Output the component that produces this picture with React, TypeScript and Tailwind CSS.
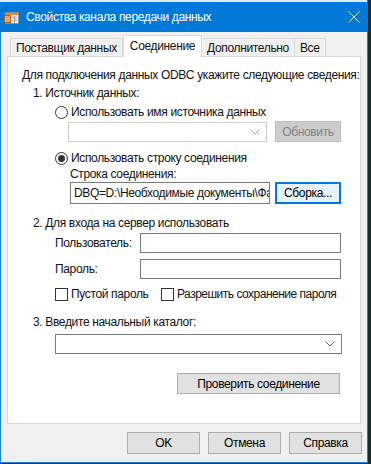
import React from 'react';

const font = { fontFamily: '"Segoe UI", "Liberation Sans", Arial, sans-serif' };

const Button = ({ children, className = '', disabled = false, focused = false }: any) => (
  <div
    className={`flex items-center justify-center text-[12px] ${
      disabled
        ? 'bg-[#cccccc] border border-[#bfbfbf] text-[#838383]'
        : focused
        ? 'bg-[#e5f1fb] border-2 border-[#0078d7] text-black'
        : 'bg-[#e1e1e1] border border-[#adadad] text-black'
    } ${className}`}
  >
    {children}
  </div>
);

const Chevron = ({ color = '#606060' }: any) => (
  <svg width="10" height="6" viewBox="0 0 10 6" className="shrink-0">
    <path d="M0.5 0.5 L5 5 L9.5 0.5" fill="none" stroke={color} strokeWidth="1" />
  </svg>
);

const Radio = ({ checked }: any) => (
  <div className="w-[13px] h-[13px] rounded-full border border-[#333333] bg-white flex items-center justify-center shrink-0">
    {checked && <div className="w-[7px] h-[7px] rounded-full bg-[#333333]" />}
  </div>
);

const Checkbox = () => <div className="w-[13px] h-[13px] border border-[#333333] bg-white shrink-0" />;

const Tab = ({ label, active }: any) =>
  active ? (
    <div className="h-[22px] px-[6px] bg-white border border-b-0 border-[#d9d9d9] flex items-center justify-center -mb-px z-10 relative">
      <span className="-mt-[2px]">{label}</span>
    </div>
  ) : (
    <div className="h-[18px] px-[5px] bg-[#f0f0f0] border border-b-0 border-[#d9d9d9] flex items-center -ml-px first:ml-0">
      {label}
    </div>
  );

export default function App() {
  return (
    <div
      className="w-[371px] h-[464px] bg-[#1c2b2b] flex overflow-hidden text-[12px] tracking-[-0.35px] text-[#111111] whitespace-nowrap"
      style={font}
    >
      <div className="w-[368px] h-[463px] flex flex-col bg-[#f0f0f0] border-l border-r border-b border-[#1883d7]">
        <div className="h-[2px] bg-[#e4e9ee] -ml-px" />
        {/* title bar */}
        <div className="h-[30px] bg-[#0078d7] flex items-center text-white -ml-px -mr-px">
          <svg width="16" height="16" viewBox="0 0 16 16" className="ml-[4px] mt-[2px] shrink-0">
            <rect x="1.5" y="2.5" width="13" height="11" fill="#ffffff" stroke="#8c8c8c" />
            <rect x="2" y="3" width="12" height="2" fill="#e8863a" />
            <rect x="0.5" y="5.5" width="6" height="7" fill="#f4a460" stroke="#b5651d" />
            <path d="M8 7 H13 M8 9 H13 M8 11 H13 M10.5 6 V13" stroke="#9aa7b4" strokeWidth="1" />
          </svg>
          <span className="ml-[6px] text-[12px] leading-none">Свойства канала передачи данных</span>
          <div className="flex-1" />
          <svg width="12" height="12" viewBox="0 0 12 12" className="mr-[8px]">
            <path d="M0.5 0.5 L11.5 11.5 M11.5 0.5 L0.5 11.5" stroke="#ffffff" strokeWidth="1" />
          </svg>
        </div>

        {/* tabs */}
        <div className="flex items-end h-[23px] pl-[9px] mt-[1px]">
          <Tab label="Поставщик данных" />
          <Tab label="Соединение" active />
          <Tab label="Дополнительно" />
          <Tab label="Все" />
        </div>

        {/* panel */}
        <div className="ml-[6px] w-[354px] h-[368px] bg-white border border-[#d9d9d9] flex flex-col">
          <div className="h-[16px] leading-[16px] mt-[10px] ml-[14px]">
            Для подключения данных ODBC укажите следующие сведения:
          </div>
          <div className="h-[16px] leading-[16px] mt-[2px] ml-[25px]">1. Источник данных:</div>

          <div className="h-[16px] mt-[3px] ml-[47px] flex items-center gap-[3px]">
            <Radio />
            <span>Использовать имя источника данных</span>
          </div>
          <div className="h-[21px] mt-[1px] ml-[60px] flex items-center">
            <div className="w-[199px] h-[20px] border border-[#cccccc] bg-white flex items-center justify-end pr-[6px]">
              <Chevron color="#a0a0a0" />
            </div>
            <Button disabled className="w-[66px] h-[21px] ml-[8px]">
              Обновить
            </Button>
          </div>

          <div className="h-[16px] mt-[8px] ml-[47px] flex items-center gap-[3px]">
            <Radio checked />
            <span>Использовать строку соединения</span>
          </div>
          <div className="h-[15px] leading-[15px] mt-[1px] ml-[62px]">Строка соединения:</div>
          <div className="h-[22px] ml-[62px] flex items-center">
            <div className="w-[200px] h-[22px] border border-[#7a7a7a] bg-white flex items-center pl-[3px] overflow-hidden">
              DBQ=D:\Необходимые документы\Фа
            </div>
            <Button focused className="w-[66px] h-[22px] ml-[5px]">
              Сборка...
            </Button>
          </div>

          <div className="h-[16px] leading-[16px] mt-[11px] ml-[25px]">2. Для входа на сервер использовать</div>
          <div className="h-[20px] mt-[2px] ml-[47px] flex items-center">
            <span className="w-[85px]">Пользователь:</span>
            <div className="w-[201px] h-[20px] border border-[#7a7a7a] bg-white" />
          </div>
          <div className="h-[20px] mt-[6px] ml-[47px] flex items-center">
            <span className="w-[85px]">Пароль:</span>
            <div className="w-[201px] h-[20px] border border-[#7a7a7a] bg-white" />
          </div>
          <div className="h-[16px] mt-[7px] ml-[47px] flex items-center">
            <Checkbox />
            <span className="ml-[3px] w-[90px]">Пустой пароль</span>
            <Checkbox />
            <span className="ml-[3px] tracking-[-0.5px]">Разрешить сохранение пароля</span>
          </div>

          <div className="h-[16px] leading-[16px] mt-[12px] ml-[25px]">3. Введите начальный каталог:</div>
          <div className="w-[287px] h-[20px] mt-[4px] ml-[47px] border border-[#7a7a7a] bg-white flex items-center justify-end pr-[6px]">
            <Chevron />
          </div>

          <div className="flex justify-end mt-[19px] pr-[20px]">
            <Button className="w-[163px] h-[21px]">Проверить соединение</Button>
          </div>
        </div>

        {/* bottom buttons */}
        <div className="flex justify-end gap-[8px] mt-[8px] pr-[5px]">
          <Button className="w-[73px] h-[22px]">OK</Button>
          <Button className="w-[73px] h-[22px]">Отмена</Button>
          <Button className="w-[73px] h-[22px]">Справка</Button>
        </div>
      </div>
    </div>
  );
}
